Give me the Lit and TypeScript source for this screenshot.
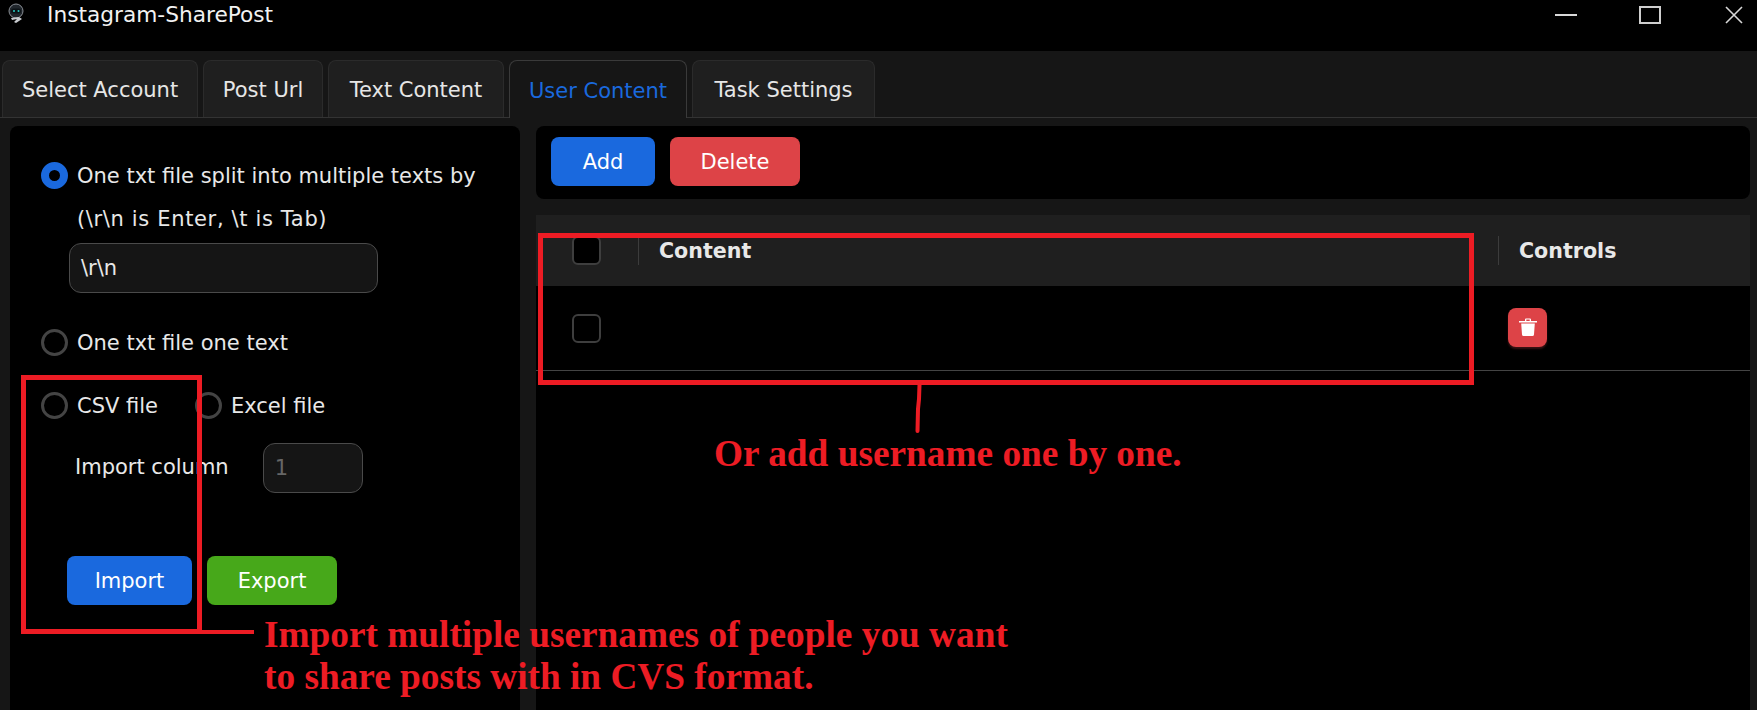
import { LitElement, html, css } from "lit";
import { customElement } from "lit/decorators.js";

@customElement("app-root")
export class AppRoot extends LitElement {
  static styles = css`
    :host { display: block; width: 1757px; height: 710px; position: relative; overflow: hidden; background: #161616; color: #e8e8e8; font-family: "DejaVu Sans", sans-serif; font-size: 21px; }
    * { box-sizing: border-box; }
    .title { height: 51px; background: #000; display: flex; align-items: flex-start; position: relative; }
    .logo { margin: 3px 0 0 6px; width: 21px; height: 21px; }
    .appname { margin: 0 0 0 20px; color: #f2f2f2; line-height: 30px; white-space: nowrap; font-size: 21.7px; }
    .winctl { margin-left: auto; display: flex; gap: 62px; padding: 4px 12px 0 0; }
    .winctl svg { width: 22px; height: 22px; display: block; }
    .tabs { height: 67px; padding: 9px 0 0 2px; display: flex; gap: 5px; border-bottom: 1px solid #333; }
    .tab { height: 57px; background: #1f1f1f; border: 1px solid #2b2b2b; border-bottom: none; border-radius: 8px 8px 0 0; display: flex; align-items: center; justify-content: center; color: #e6e6e6; padding-top: 2px; }
    .tab.active { background: #161616; color: #1a69de; border-color: #3a3a3a; height: 58px; z-index: 1; }
    .body { display: flex; gap: 16px; padding: 8px 7px 0 10px; height: 592px; }
    .left { width: 510px; background: #000; border-radius: 8px 8px 0 0; padding: 36px 0 0 31px; flex: none; }
    .opt { display: flex; align-items: center; gap: 9px; white-space: nowrap; height: 27px; }
    .radio { width: 27px; height: 27px; border-radius: 50%; border: 3px solid #444; flex: none; }
    .radio.on { border: 8px solid #1a69de; background: #000; }
    .sub { margin: 17px 0 0 36px; line-height: 27px; white-space: nowrap; letter-spacing: 0.65px; }
    .field { background: #151515; border: 1px solid #4a4a4a; border-radius: 12px; height: 50px; display: flex; align-items: center; padding: 0 11px; }
    .f1 { width: 309px; margin: 10px 0 0 28px; }
    .f2 { width: 100px; color: #666; }
    .o2 { margin-top: 36px; }
    .o3 { margin-top: 36px; gap: 0; }
    .o3 .radio + span { margin-left: 9px; width: 86px; }
    .o3 .radio.x { margin-left: 32px; }
    .col { display: flex; align-items: center; margin: 24px 0 0 34px; gap: 34px; }
    .col span { margin-bottom: 3px; }
    .acts { display: flex; gap: 15px; margin: 63px 0 0 26px; }
    .btn { height: 49px; border-radius: 8px; display: flex; align-items: center; justify-content: center; color: #fff; flex: none; }
    .blue { background: #1a69de; }
    .red { background: #dd4347; }
    .green { background: #47a81a; }
    .right { flex: 1; display: flex; flex-direction: column; gap: 16px; min-width: 0; }
    .bar { height: 73px; background: #000; border-radius: 8px; display: flex; gap: 15px; padding: 11px 0 0 15px; }
    .grid { flex: 1; background: #000; }
    .thead { height: 71px; background: #1f1f1f; display: flex; align-items: center; font-weight: 700; font-size: 20.6px; color: #e8e8e8; }
    .trow { height: 85px; border-bottom: 1px solid #444; display: flex; align-items: center; }
    .chk { width: 29px; height: 29px; border-radius: 6px; border: 2px solid #3e3e3e; background: #000; margin-left: 36px; flex: none; }
    .sep { width: 1px; height: 29px; background: #3c3c3c; flex: none; }
    .c1 { margin-left: 37px; margin-right: 20px; }
    .cx { width: 839px; }
    .c2 { margin-right: 20px; }
    .trash { width: 39px; height: 39px; border-radius: 8px; background: #dd4347; margin: -2px 0 0 907px; display: flex; align-items: center; justify-content: center; box-shadow: 0 2px 2px #3a1214; }
    .anno { position: absolute; border: 5px solid #ed1c24; }
    .hline { position: absolute; background: #ed1c24; }
    .stroke { position: absolute; left: 912px; top: 385px; width: 12px; height: 49px; }
    .note { position: absolute; color: #ed1c24; font-family: "Liberation Serif", serif; font-weight: 700; font-size: 37.3px; line-height: 42px; white-space: nowrap; }
  `;
  render() {
    return html`
      <div class="title">
        <svg class="logo" viewBox="0 0 21 21"><circle cx="10" cy="8" r="7" fill="#20262c" stroke="#8a8f96" stroke-width="1"/><rect x="5" y="5.5" width="10" height="5" rx="2.5" fill="#0b1216"/><circle cx="8" cy="8" r="1" fill="#2bd0c8"/><circle cx="12.5" cy="8" r="1" fill="#2bd0c8"/><path d="M5 15l8-1 3 2-6 4-2-1 3-3-5 1z" fill="#c9ccd0"/></svg>
        <div class="appname">Instagram-SharePost</div>
        <div class="winctl">
          <svg viewBox="0 0 22 22"><path d="M0 11h22" stroke="#d8d8d8" stroke-width="2"/></svg>
          <svg viewBox="0 0 22 22"><rect x="1" y="3" width="20" height="16" fill="none" stroke="#cfcfcf" stroke-width="2"/></svg>
          <svg viewBox="0 0 22 22"><path d="M3 3l16 16M19 3L3 19" stroke="#d8d8d8" stroke-width="1.6"/></svg>
        </div>
      </div>
      <div class="tabs">
        <div class="tab" style="width:196px">Select Account</div>
        <div class="tab" style="width:120px">Post Url</div>
        <div class="tab" style="width:176px">Text Content</div>
        <div class="tab active" style="width:178px">User Content</div>
        <div class="tab" style="width:183px">Task Settings</div>
      </div>
      <div class="body">
        <div class="left">
          <div class="opt"><span class="radio on"></span><span>One txt file split into multiple texts by</span></div>
          <div class="sub">(\\r\\n is Enter, \\t is Tab)</div>
          <div class="field f1">\\r\\n</div>
          <div class="opt o2"><span class="radio"></span><span>One txt file one text</span></div>
          <div class="opt o3"><span class="radio"></span><span>CSV file</span><span class="radio x"></span><span>Excel file</span></div>
          <div class="col"><span>Import column</span><div class="field f2">1</div></div>
          <div class="acts"><div class="btn blue" style="width:125px">Import</div><div class="btn green" style="width:130px">Export</div></div>
        </div>
        <div class="right">
          <div class="bar"><div class="btn blue" style="width:104px">Add</div><div class="btn red" style="width:130px">Delete</div></div>
          <div class="grid">
            <div class="thead"><span class="chk"></span><span class="sep c1"></span><span class="cx">Content</span><span class="sep c2"></span><span>Controls</span></div>
            <div class="trow"><span class="chk"></span><span class="trash"><svg width="20" height="20" viewBox="0 0 20 20"><path d="M1 4h18v1.6H1zM7 4V2.4q0-1 1-1h4q1 0 1 1V4h-1.3V2.6H8.3V4zM3.2 6.4h13.6l-.8 11q-.1 1.6-1.6 1.6H5.6q-1.5 0-1.6-1.6z" fill="#fff"/></svg></span></div>
          </div>
        </div>
      </div>
      <div class="anno" style="left:538px;top:233px;width:936px;height:152px"></div>
      <svg class="stroke" viewBox="0 0 12 49"><path d="M7.5 0L7 14 6 24 5.5 46" fill="none" stroke="#ed1c24" stroke-width="4" stroke-linecap="round"/></svg>
      <div class="note" style="left:714px;top:433px">Or add username one by one.</div>
      <div class="anno" style="left:21px;top:375px;width:181px;height:259px"></div>
      <div class="hline" style="left:202px;top:630px;width:52px;height:4px"></div>
      <div class="note" style="left:264px;top:614px">Import multiple usernames of people you want<br />to share posts with in CVS format.</div>
    `;
  }
}
